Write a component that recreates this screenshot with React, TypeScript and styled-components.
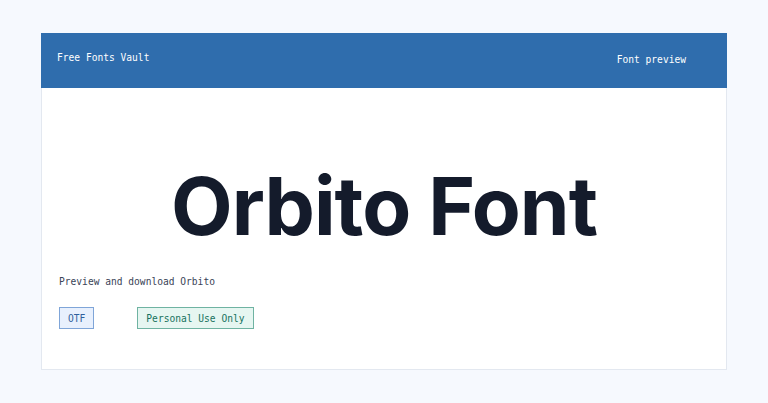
import { FC } from "react";
import styled, { createGlobalStyle } from "styled-components";

const GlobalStyle = createGlobalStyle`
  html, body {
    margin: 0;
    padding: 0;
    background: #f6f9fe;
  }
  body {
    font-family: "DejaVu Sans Mono", "Liberation Mono", monospace;
  }
`;

const Page = styled.div`
  padding: 33px 41px 0 41px;
  height: 403px;
  box-sizing: border-box;
`;

const Card = styled.div`
  background: #ffffff;
  border: 1px solid #e3e8f0;
  border-top: none;
  height: 337px;
  box-sizing: border-box;
  display: flex;
  flex-direction: column;
`;

const Header = styled.header`
  background: #2f6dad;
  height: 55px;
  margin: 0 -1px;
  padding: 0 41px 0 16px;
  display: flex;
  align-items: center;
  justify-content: space-between;
  color: #ffffff;
  font-size: 9.6px;
`;

const Brand = styled.div`
  margin-bottom: 6px;
`;

const Nav = styled.div`
  margin-top: -2px;
`;

const Body = styled.main`
  flex: 1;
  display: flex;
  flex-direction: column;
  padding: 0 17px;
`;

const Specimen = styled.h1`
  margin: 78px 0 0 0;
  text-align: center;
  font-family: Inter, "Noto Sans", sans-serif;
  font-weight: 700;
  font-size: 80px;
  line-height: 80px;
  letter-spacing: -1px;
  color: #141b2b;
`;

const Lead = styled.p`
  margin: 30px 0 0 0;
  font-size: 9.6px;
  color: #3a4357;
`;

const Tags = styled.div`
  display: flex;
  gap: 43px;
  margin-top: 20px;
`;

const Tag = styled.span<{ $tone: "blue" | "green" }>`
  height: 22px;
  box-sizing: border-box;
  padding: 0 8px;
  display: flex;
  align-items: center;
  font-size: 9.6px;
  border: 1px solid ${(p) => (p.$tone === "blue" ? "#7fa5d8" : "#6fb3a2")};
  background: ${(p) => (p.$tone === "blue" ? "#e8f0fd" : "#e6f6f1")};
  color: ${(p) => (p.$tone === "blue" ? "#2f5f9c" : "#17725d")};
`;

const App: FC = () => {
  return (
    <>
      <GlobalStyle />
      <Page>
        <Card>
          <Header>
            <Brand>Free Fonts Vault</Brand>
            <Nav>Font preview</Nav>
          </Header>
          <Body>
            <Specimen>Orbito Font</Specimen>
            <Lead>Preview and download Orbito</Lead>
            <Tags>
              <Tag $tone="blue">OTF</Tag>
              <Tag $tone="green">Personal Use Only</Tag>
            </Tags>
          </Body>
        </Card>
      </Page>
    </>
  );
};

export default App;
